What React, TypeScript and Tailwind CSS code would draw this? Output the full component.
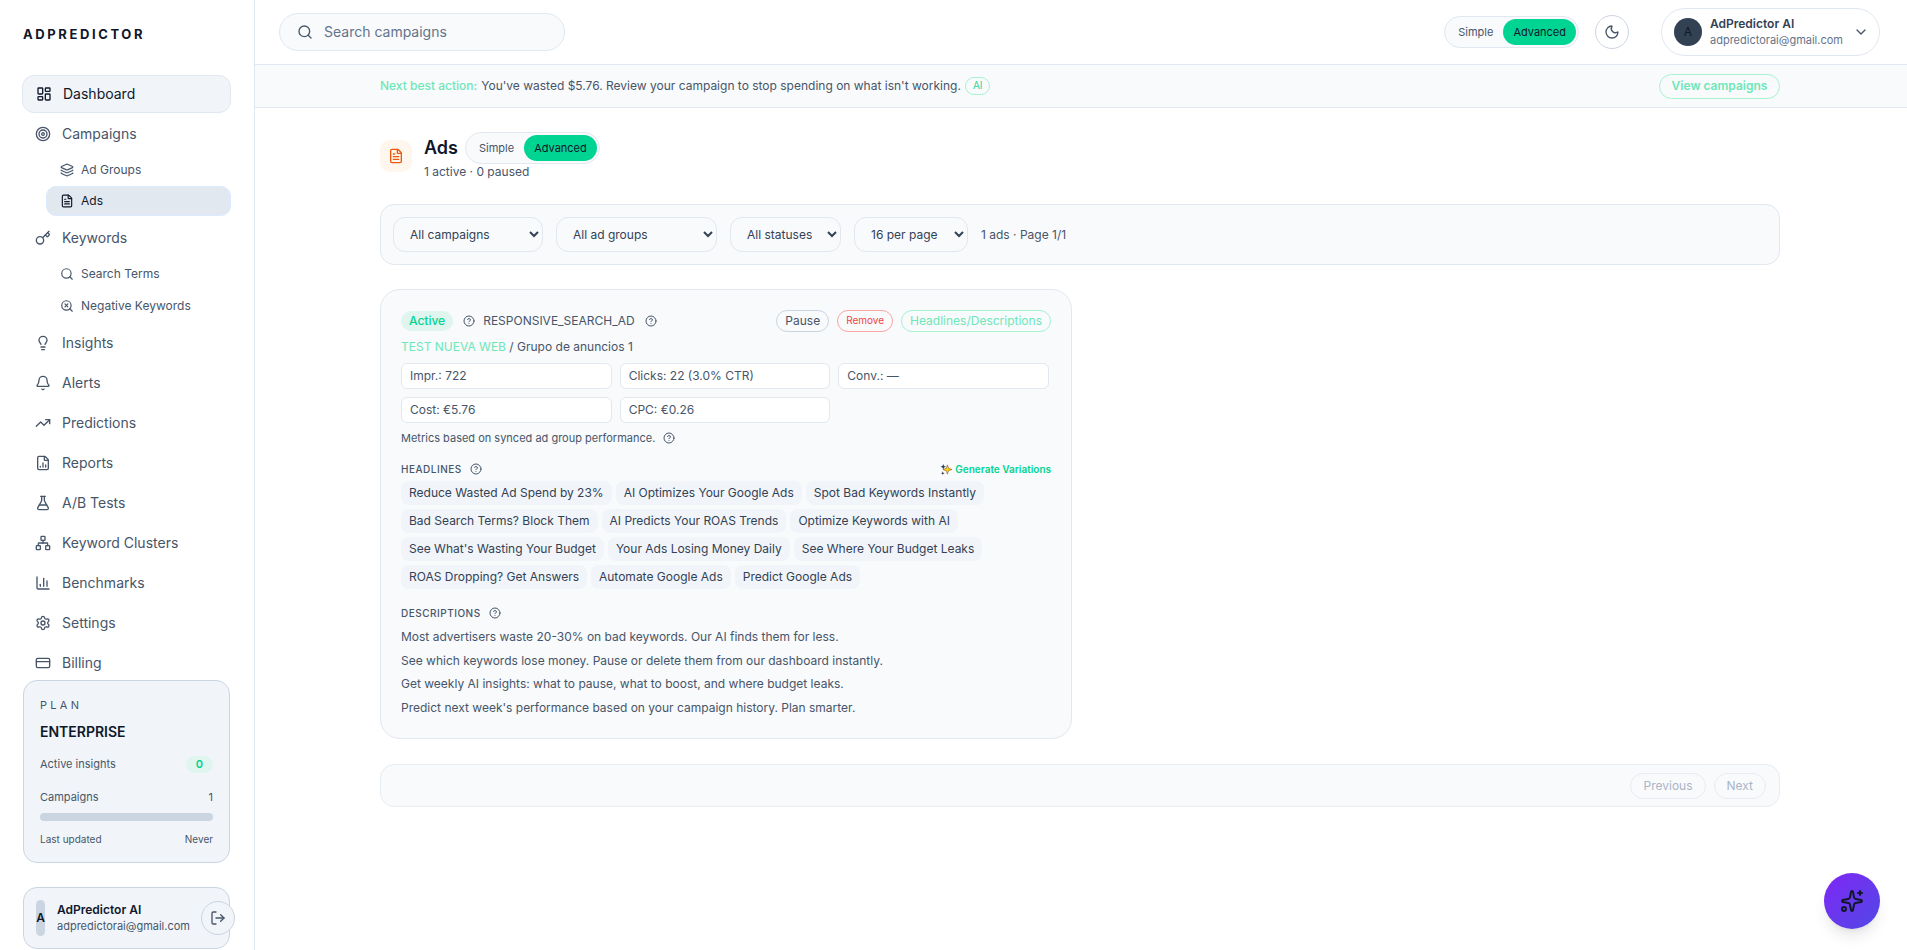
import {
  Bell,
  ChartColumn,
  ChevronDown,
  CircleHelp,
  CreditCard,
  FileChartColumn,
  FileText,
  FlaskConical,
  Key,
  Layers,
  LayoutDashboard,
  Lightbulb,
  LogOut,
  Moon,
  Network,
  Search,
  SearchX,
  Settings,
  Sparkles,
  Target,
  TrendingUp,
} from "lucide-react";

const NAV_TAIL = [
  { label: "Insights", icon: Lightbulb },
  { label: "Alerts", icon: Bell },
  { label: "Predictions", icon: TrendingUp },
  { label: "Reports", icon: FileChartColumn },
  { label: "A/B Tests", icon: FlaskConical },
  { label: "Keyword Clusters", icon: Network },
  { label: "Benchmarks", icon: ChartColumn },
  { label: "Settings", icon: Settings },
  { label: "Billing", icon: CreditCard },
];

const HEADLINES = [
  "Reduce Wasted Ad Spend by 23%",
  "AI Optimizes Your Google Ads",
  "Spot Bad Keywords Instantly",
  "Bad Search Terms? Block Them",
  "AI Predicts Your ROAS Trends",
  "Optimize Keywords with AI",
  "See What's Wasting Your Budget",
  "Your Ads Losing Money Daily",
  "See Where Your Budget Leaks",
  "ROAS Dropping? Get Answers",
  "Automate Google Ads",
  "Predict Google Ads",
];

const DESCRIPTIONS = [
  "Most advertisers waste 20-30% on bad keywords. Our AI finds them for less.",
  "See which keywords lose money. Pause or delete them from our dashboard instantly.",
  "Get weekly AI insights: what to pause, what to boost, and where budget leaks.",
  "Predict next week's performance based on your campaign history. Plan smarter.",
];

const METRICS = ["Impr.: 722", "Clicks: 22 (3.0% CTR)", "Conv.: —", "Cost: €5.76", "CPC: €0.26"];

function NavItem({ label, icon: Icon }: { label: string; icon: typeof Bell }) {
  return (
    <div className="flex h-10 items-center gap-[11px] px-[13px] text-sm text-[#475569]">
      <Icon className="h-4 w-4 shrink-0" strokeWidth={2} />
      <span>{label}</span>
    </div>
  );
}

function SubItem({ label, icon: Icon, active }: { label: string; icon: typeof Bell; active?: boolean }) {
  return (
    <div
      className={
        active
          ? "ml-6 flex h-[30px] items-center gap-[7px] rounded-[10px] border border-[#dbeafe] bg-[#e2e8f0] px-[13px] text-xs text-[#0f172a]"
          : "ml-6 flex h-8 items-center gap-[7px] px-[14px] text-xs text-[#475569]"
      }
    >
      <Icon className="h-[14px] w-[14px] shrink-0" strokeWidth={2} />
      <span>{label}</span>
    </div>
  );
}

function ModeToggle() {
  return (
    <div className="flex h-8 items-center rounded-full border border-[#e2e8f0] bg-[#f8fafc] p-[2px] text-[11px]">
      <span className="pr-[10px] pl-[11px] text-[#475569]">Simple</span>
      <span className="flex h-[26px] items-center rounded-full bg-[#00d492] px-[10px] text-[#0f172a]">Advanced</span>
    </div>
  );
}

function Help() {
  return <CircleHelp className="h-3 w-3 shrink-0 text-[#475569]" strokeWidth={2} />;
}

function Sidebar() {
  return (
    <aside className="flex h-[950px] w-[255px] shrink-0 flex-col overflow-hidden border-r border-[#e2e8f0] bg-white pr-[23px] pl-[22px]">
      <div className="pt-[26px] pl-[1px] text-[13px] leading-4 font-bold tracking-[0.2em] text-[#0f172a]">ADPREDICTOR</div>
      <nav className="mt-[33px] flex flex-col">
        <div className="flex h-[38px] items-center gap-[11px] rounded-[12px] border border-[#e2e8f0] bg-[#f1f5f9] px-[13px] text-sm text-[#0f172a]">
          <LayoutDashboard className="h-4 w-4" strokeWidth={2} />
          <span>Dashboard</span>
        </div>
        <div className="mt-[1px]">
          <NavItem label="Campaigns" icon={Target} />
        </div>
        <div className="flex flex-col pb-[1px]">
          <SubItem label="Ad Groups" icon={Layers} />
          <SubItem label="Ads" icon={FileText} active />
        </div>
        <div className="mt-[1px]">
          <NavItem label="Keywords" icon={Key} />
        </div>
        <div className="flex flex-col pb-[1px]">
          <SubItem label="Search Terms" icon={Search} />
          <SubItem label="Negative Keywords" icon={SearchX} />
        </div>
        {NAV_TAIL.map((item) => (
          <NavItem key={item.label} label={item.label} icon={item.icon} />
        ))}
      </nav>

      {/* plan */}
      <div className="relative -mt-[3px] ml-[1px] w-[207px] shrink-0 rounded-[14px] border border-[#cbd5e1] bg-[#f1f5f9] px-4 pt-[16px] pb-[15px]">
        <div className="text-[11px] leading-4 tracking-[0.3em] text-[#475569]">PLAN</div>
        <div className="mt-[9px] text-sm leading-5 font-semibold text-[#0f172a]">ENTERPRISE</div>
        <div className="mt-[14px] flex h-[17px] items-center justify-between text-[11px] text-[#475569]">
          <span>Active insights</span>
          <span className="rounded-full bg-[#dff5ee] px-[10px] leading-[17px] font-semibold text-[#00d492]">0</span>
        </div>
        <div className="mt-[16px] flex h-4 items-center justify-between text-[11px] text-[#475569]">
          <span>Campaigns</span>
          <span>1</span>
        </div>
        <div className="mt-[8px] h-2 rounded-full bg-[#cbd5e1]" />
        <div className="mt-[10px] flex h-4 items-center justify-between text-[10px] text-[#475569]">
          <span>Last updated</span>
          <span>Never</span>
        </div>
      </div>

      {/* account */}
      <div className="relative mt-[24px] ml-[1px] flex h-[62px] w-[207px] shrink-0 items-center rounded-[14px] border border-[#cbd5e1] bg-[#f1f5f9] pl-3">
        <div className="flex h-9 w-[9px] items-center justify-center rounded-full bg-[#cbd5e1] text-xs font-semibold text-[#0f172a]">
          A
        </div>
        <div className="ml-[12px] text-[11px] leading-4">
          <div className="text-xs font-semibold text-[#0f172a]">AdPredictor AI</div>
          <div className="text-[#475569]">adpredictorai@gmail.com</div>
        </div>
        <div className="absolute top-[13px] -right-[6px] flex h-[34px] w-[34px] items-center justify-center rounded-full border border-[#cbd5e1] bg-[#f1f5f9] text-[#475569]">
          <LogOut className="h-4 w-4" strokeWidth={2} />
        </div>
      </div>
    </aside>
  );
}

function Topbar() {
  return (
    <header className="flex h-[65px] shrink-0 items-center justify-between border-b border-[#e2e8f0] bg-white pr-[27px] pl-[24px]">
      <div className="flex h-[38px] w-[286px] items-center gap-[11px] rounded-full border border-[#e2e8f0] bg-[#f8fafc] px-[17px] text-sm text-[#64748b]">
        <Search className="h-4 w-4 text-[#475569]" strokeWidth={2} />
        <span>Search campaigns</span>
      </div>
      <div className="flex items-center">
        <ModeToggle />
        <div className="ml-4 flex h-[34px] w-[34px] items-center justify-center rounded-full border border-[#cbd5e1] text-[#475569]">
          <Moon className="h-4 w-4" strokeWidth={2} />
        </div>
        <div className="ml-8 flex h-12 w-[219px] items-center rounded-full border border-[#e2e8f0] bg-white pl-[12px]">
          <div className="flex h-7 w-7 items-center justify-center rounded-full bg-[#334155] text-xs text-[#0f172a]">A</div>
          <div className="ml-2 text-[11px] leading-[16px]">
            <div className="text-xs font-semibold text-[#334155]">AdPredictor AI</div>
            <div className="text-[#64748b]">adpredictorai@gmail.com</div>
          </div>
          <ChevronDown className="ml-[10px] h-4 w-4 text-[#475569]" strokeWidth={2} />
        </div>
      </div>
    </header>
  );
}

function AdCard() {
  return (
    <div className="mt-[24px] w-[692px] rounded-[20px] border border-[#e2e8f0] bg-[#f8fafc] px-5 pt-[20px] pb-[19px]">
      <div className="flex h-[22px] items-center text-xs text-[#475569]">
        <span className="flex h-5 items-center rounded-full bg-[#dff5ee] px-2 font-medium text-[#00d492]">Active</span>
        <span className="ml-[10px] flex items-center gap-[8px]">
          <Help />
          RESPONSIVE_SEARCH_AD
          <span className="ml-[2px]">
            <Help />
          </span>
        </span>
        <div className="ml-auto flex items-center gap-[8px]">
          <span className="flex h-[22px] items-center rounded-full border border-[#cbd5e1] px-2 text-[#475569]">Pause</span>
          <span className="flex h-[22px] items-center rounded-full border border-[#fca5a5] px-[8px] text-[10px] text-[#ef4444]">
            Remove
          </span>
          <span className="flex h-[22px] items-center rounded-full border border-[#a7f3d0] px-2 text-[#6ee7b7]">
            Headlines/Descriptions
          </span>
        </div>
      </div>

      <div className="mt-[7px] text-xs leading-4 text-[#475569]">
        <span className="text-[#6ee7b7]">TEST NUEVA WEB</span> / Grupo de anuncios 1
      </div>

      <div className="mt-2 grid w-[648px] grid-cols-3 gap-2">
        {METRICS.map((m) => (
          <div key={m} className="flex h-[26px] items-center rounded-[6px] border border-[#e2e8f0] bg-white px-2 text-xs text-[#475569]">
            {m}
          </div>
        ))}
      </div>

      <div className="mt-[7px] flex h-4 items-center gap-2 text-[11px] text-[#475569]">
        Metrics based on synced ad group performance.
        <Help />
      </div>

      <div className="mt-[15px] flex h-4 items-center justify-between text-[10px] tracking-[0.05em] text-[#475569]">
        <span className="flex items-center gap-2 font-medium">
          HEADLINES
          <Help />
        </span>
        <span className="flex items-center gap-[2px] font-semibold tracking-normal text-[#00d492]">
          <svg viewBox="0 0 14 14" className="h-[13px] w-[13px]">
            <path d="M3.5 1l.8 2.2 2.2.8-2.2.8-.8 2.2-.8-2.2L.5 4l2.2-.8z" fill="#1e3a5f" />
            <path d="M3 9l.6 1.4L5 11l-1.4.6L3 13l-.6-1.4L1 11l1.4-.6z" fill="#334155" />
            <path d="M8 2l1.3 3.7L13 7 9.3 8.3 8 12 6.7 8.3 3 7l3.7-1.3z" fill="#facc15" stroke="#713f12" strokeWidth=".5" />
          </svg>
          Generate Variations
        </span>
      </div>

      <div className="mt-[4px] flex w-[620px] flex-wrap gap-1">
        {HEADLINES.map((h) => (
          <span key={h} className="flex h-6 items-center rounded-[8px] bg-[#f1f5f9] px-2 text-xs text-[#334155]">
            {h}
          </span>
        ))}
      </div>

      <div className="mt-[16px] flex h-4 items-center gap-2 text-[10px] font-medium tracking-[0.05em] text-[#475569]">
        DESCRIPTIONS
        <Help />
      </div>
      <div className="mt-[4px] flex flex-col text-xs leading-[23.6px] text-[#475569]">
        {DESCRIPTIONS.map((d) => (
          <div key={d}>{d}</div>
        ))}
      </div>
    </div>
  );
}

function Content() {
  const selectClass = "h-[35px] rounded-[12px] border border-[#e2e8f0] bg-[#f8fafc] px-3 text-xs text-[#334155]";
  return (
    <main className="ml-[125px] flex w-[1400px] flex-col pt-[24px]">
      <div className="flex items-start gap-3">
        <div className="mt-[8px] flex h-8 w-8 items-center justify-center rounded-[10px] bg-[#fff7ed] text-[#ea580c]">
          <FileText className="h-4 w-4" strokeWidth={2} />
        </div>
        <div>
          <div className="flex items-center gap-[7px]">
            <span className="text-lg leading-7 font-semibold text-[#0f172a]">Ads</span>
            <ModeToggle />
          </div>
          <div className="text-xs leading-4 text-[#475569]">1 active · 0 paused</div>
        </div>
      </div>

      <div className="mt-[24px] flex h-[61px] items-center gap-[13px] rounded-[14px] border border-[#e2e8f0] bg-[#f8fafc] px-3 text-xs text-[#475569]">
        <select className={`${selectClass} w-[150px]`}>
          <option>All campaigns</option>
        </select>
        <select className={`${selectClass} w-[161px]`}>
          <option>All ad groups</option>
        </select>
        <select className={`${selectClass} w-[111px]`}>
          <option>All statuses</option>
        </select>
        <select className={`${selectClass} w-[114px]`}>
          <option>16 per page</option>
        </select>
        <span>1 ads · Page 1/1</span>
      </div>

      <AdCard />

      <div className="mt-[25px] flex h-[43px] items-center justify-end gap-2 rounded-[14px] border border-[#e2e8f0] bg-[#f8fafc] px-[13px] text-xs text-[#94a3b8] opacity-80">
        <span className="flex h-[26px] items-center rounded-full border border-[#e2e8f0] px-[12px]">Previous</span>
        <span className="flex h-[26px] items-center rounded-full border border-[#e2e8f0] px-[12px]">Next</span>
      </div>
    </main>
  );
}

export default function App() {
  return (
    <div className="flex h-[950px] w-full overflow-hidden bg-white font-['Inter',sans-serif]">
      <Sidebar />
      <div className="flex min-w-0 flex-1 flex-col">
        <Topbar />
        <div className="flex h-[43px] shrink-0 items-center justify-between border-b border-[#e2e8f0] bg-[#f8fafc] pr-[127px] pl-[125px] text-xs text-[#475569]">
          <div className="flex items-center">
            <span className="font-medium text-[#6ee7b7]">Next best action:</span>
            <span className="ml-1">You&apos;ve wasted $5.76. Review your campaign to stop spending on what isn&apos;t working.</span>
            <span className="ml-1 flex h-[18px] items-center rounded-full border border-[#a7f3d0] px-[7px] text-[10px] text-[#34d399]">AI</span>
          </div>
          <span className="flex h-[25px] w-[121px] items-center justify-center rounded-full border border-[#a7f3d0] font-semibold text-[#6ee7b7]">
            View campaigns
          </span>
        </div>
        <Content />
      </div>

      <div className="fixed top-[873px] left-[1824px] flex h-14 w-14 items-center justify-center rounded-full bg-gradient-to-br from-[#7e22f5] to-[#4f46e5] text-[#0f172a] shadow-lg">
        <Sparkles className="h-6 w-6" strokeWidth={2} />
      </div>
    </div>
  );
}
